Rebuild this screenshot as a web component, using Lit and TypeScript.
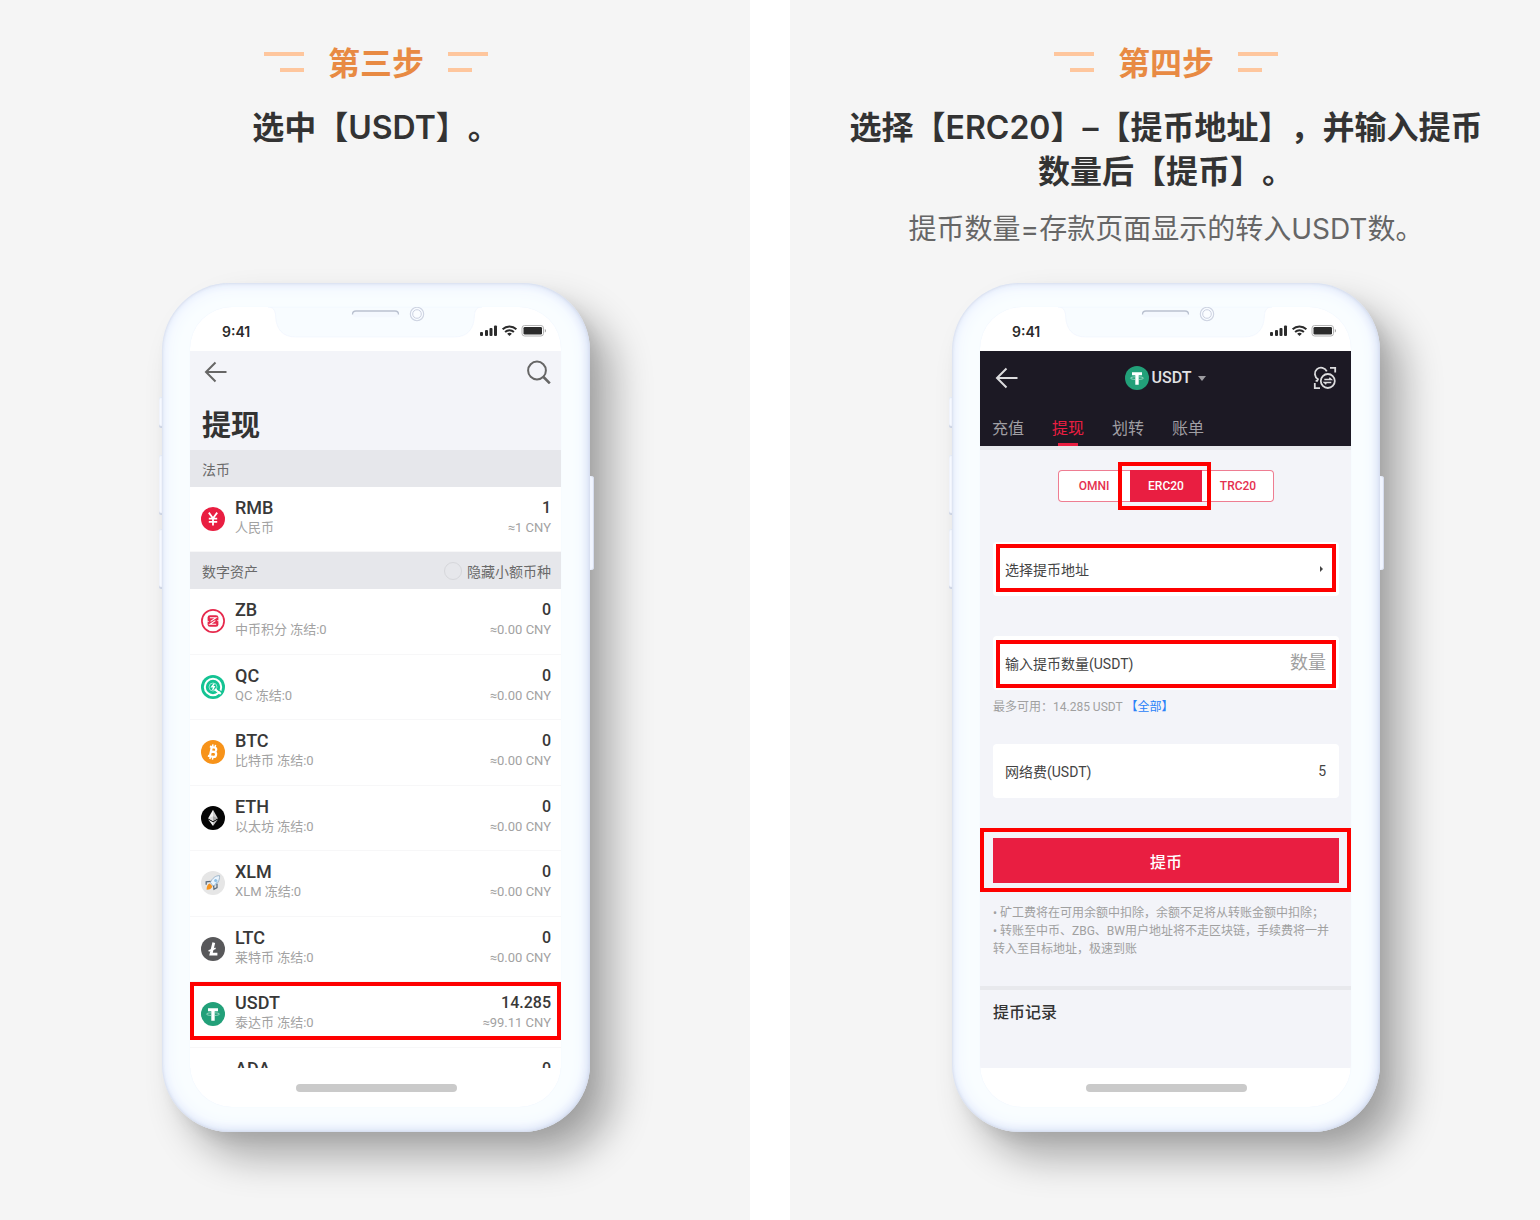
import { LitElement, html, css, svg, nothing } from "lit";
import { customElement, property } from "lit/decorators.js";

interface Asset {
  code: string;
  note: string;
  amount: string;
  value: string;
  marked?: boolean;
}

const FIAT: Asset[] = [{ code: "RMB", note: "人民币", amount: "1", value: "≈1 CNY" }];

const COINS: Asset[] = [
  { code: "ZB", note: "中币积分 冻结:0", amount: "0", value: "≈0.00 CNY" },
  { code: "QC", note: "QC 冻结:0", amount: "0", value: "≈0.00 CNY" },
  { code: "BTC", note: "比特币 冻结:0", amount: "0", value: "≈0.00 CNY" },
  { code: "ETH", note: "以太坊 冻结:0", amount: "0", value: "≈0.00 CNY" },
  { code: "XLM", note: "XLM 冻结:0", amount: "0", value: "≈0.00 CNY" },
  { code: "LTC", note: "莱特币 冻结:0", amount: "0", value: "≈0.00 CNY" },
  { code: "USDT", note: "泰达币 冻结:0", amount: "14.285", value: "≈99.11 CNY", marked: true },
  { code: "ADA", note: "", amount: "0", value: "" },
];

const COIN_ART: Record<string, unknown> = {
  RMB: svg`<circle cx="12" cy="12" r="12" fill="#e91e41"/>
    <path d="M7.8 5.600 12 11.200l4.200-5.600M12 11v7.600M7.800 11.600h8.400M7.800 14.800h8.400" fill="none" stroke="#fff" stroke-width="1.800"/>`,
  ZB: svg`<circle cx="12" cy="12" r="11.100" fill="#fff" stroke="#e6294c" stroke-width="1.700"/>
    <rect x="6.600" y="6.200" width="10.800" height="11.600" rx="2.400" fill="#e6294c"/>
    <path d="M8.800 8.800h6.200l-5.400 3.600M15.200 15.200H9l5.400-3.600" fill="none" stroke="#fff" stroke-width="1.100"/>
    <path d="M6.400 11.400l1.800.9-1.800.9zM17.600 10.800l-1.800.9 1.800.9z" fill="#fff"/>`,
  QC: svg`<circle cx="12" cy="12" r="12" fill="#14c393"/>
    <circle cx="12" cy="12" r="8.200" fill="none" stroke="#fff" stroke-width="2"/>
    <circle cx="12" cy="12" r="4" fill="none" stroke="#c9f3e6" stroke-width=".7"/>
    <path d="M13.200 8.600 10.800 11.800h2.400l-1.600 3" fill="none" stroke="#fff" stroke-width="1.400"/>
    <path d="m13.800 14.200 6 4.600" stroke="#fff" stroke-width="2.200"/>
    <path d="m16.500 14.300 4.500 3" stroke="#14c393" stroke-width="1.300"/>`,
  BTC: svg`<circle cx="12" cy="12" r="12" fill="#f7931a"/>
    <g transform="rotate(12 12 12)" fill="none" stroke="#fff">
      <path d="M9.800 7.300v9.400M7.800 7.300h4.700a2.200 2.200 0 0 1 0 4.400H9.800h3.300a2.500 2.500 0 0 1 0 5H7.800" stroke-width="2.200"/>
      <path d="M10.400 4.500v2.500M13 4.500v2.500M10.400 17v2.500M13 17v2.500" stroke-width="1.500"/>
    </g>`,
  ETH: svg`<circle cx="12" cy="12" r="12" fill="#050505"/>
    <path d="M12 3.800 7.200 12.300 12 15z" fill="#f4f4f4"/><path d="m12 3.800 4.800 8.500L12 15z" fill="#cfcfcf"/>
    <path d="M12 10.200 7.200 12.300 12 15z" fill="#dcdcdc"/><path d="m12 10.200 4.800 2.100L12 15z" fill="#a8a8a8"/>
    <path d="M7.200 13.500 12 20v-3.800z" fill="#f4f4f4"/><path d="M16.800 13.500 12 20v-3.800z" fill="#c4c4c4"/>`,
  XLM: svg`<circle cx="12" cy="12" r="12" fill="#e6e6e6"/>
    <path d="M18.600 4.600c-4 0-7.200 2.400-9.200 6.800l2.800 3.800c4-1.600 6.600-5.600 6.400-10.600z" fill="#eaf4fd" stroke="#8fa9c0" stroke-width=".8"/>
    <path d="m12.200 15.200 3.400-2.400 1.600-4.600z" fill="#a9cdea"/>
    <circle cx="14.600" cy="9.400" r="1.500" fill="#8fbfe4"/>
    <path d="m9.600 10.400-4.400.4v3M12.600 14.600l.4 3.600 3-1.600v-3.800" fill="none" stroke="#5c6c7c" stroke-width="1.300"/>
    <path d="M8.800 12.600c-2.400.8-3.200 3-3.200 6.200 3 0 5.200-1.200 5.800-3.600z" fill="#f7941d"/>`,
  LTC: svg`<circle cx="12" cy="12" r="12" fill="#58585a"/>
    <path d="M12.800 5.600 10 17.200h6.400" fill="none" stroke="#fff" stroke-width="2.800"/>
    <path d="m7.600 14 7-2.800" stroke="#fff" stroke-width="1.500"/>`,
  USDT: svg`<circle cx="12" cy="12" r="12" fill="#22a079"/>
    <path d="M7 6.200h10v3h-3.300v9.600h-3.400V9.200H7z" fill="#fff"/>
    <path d="M10.500 10.800c-2.900.1-5 .6-5 1.300s2.100 1.300 5 1.400M13.500 10.800c2.900.1 5 .6 5 1.300s-2.100 1.300-5 1.400" fill="none" stroke="#bfe6d8" stroke-width=".7"/>`,
};

const coin = (code: string) =>
  html`<svg class="coin" viewBox="0 0 24 24" aria-hidden="true">${COIN_ART[code] ?? nothing}</svg>`;

const backArrow = html`<svg class="glyph" viewBox="0 0 24 24" aria-hidden="true">
  <path d="M12.500 2.500 3 12l9.500 9.500M3 12h20.500" fill="none" stroke="currentColor" stroke-width="2" />
</svg>`;

const FONT_UI = css`Roboto, "Noto Sans CJK SC", sans-serif`;

const shared = css`
  :host {
    display: block;
    font-family: ${FONT_UI};
    text-spacing-trim: space-all;
  }
  * {
    box-sizing: border-box;
  }
  button {
    font: inherit;
    color: inherit;
    background: none;
    border: 0;
    padding: 0;
    cursor: pointer;
  }
  h2,
  h3,
  p,
  ul {
    margin: 0;
    padding: 0;
    list-style: none;
  }
  .glyph {
    display: block;
    width: 24px;
    height: 24px;
  }
  .coin {
    display: block;
    flex: none;
    width: 24px;
    height: 24px;
  }
  .mark {
    position: absolute;
    border: 4px solid #fe0000;
    pointer-events: none;
  }
`;

@customElement("phone-frame")
class PhoneFrame extends LitElement {
  static styles = [
    shared,
    css`
      .body {
        position: relative;
        width: 428px;
        max-width: 100%;
        margin: 0 auto;
        padding: 24px 29px 25px 28px;
        border-radius: 68px;
        background: #f9fdff;
        box-shadow:
          inset 0 0 3px #cdd4e4,
          inset -2px -1px 10px #d3dcf2,
          inset 0 0 20px #e8effe,
          24px 26px 38px rgba(0, 0, 0, 0.3),
          6px 8px 14px rgba(0, 0, 0, 0.06);
      }
      .key {
        position: absolute;
        left: -3px;
        width: 3px;
        border-radius: 2px 0 0 2px;
        background: #f6f9ff;
        box-shadow: inset 0 -2px 1px #ccd3e2, inset 0 1px 1px #e4e9f3;
      }
      .key.mute {
        top: 114px;
        height: 31px;
      }
      .key.up {
        top: 172px;
        height: 60px;
      }
      .key.down {
        top: 246px;
        height: 60px;
      }
      .key.power {
        top: 193px;
        left: auto;
        right: -4px;
        width: 4px;
        height: 94px;
        border-radius: 0 3px 3px 0;
        background: #f1f5ff;
        box-shadow: inset -1px 0 1px #d5dcee;
      }
      .screen {
        position: relative;
        overflow: hidden;
        border-radius: 42px;
        background: #fff;
        box-shadow: 0 0 1px #e6eefc;
      }
      .status {
        display: flex;
        justify-content: space-between;
        align-items: flex-end;
        height: 44px;
        padding: 0 15px 9px 32px;
        color: #2b2b2b;
        font: 600 14px/20px Inter, sans-serif;
      }
      .signals {
        display: block;
        width: 66px;
        height: 20px;
      }
      .notch {
        position: absolute;
        top: 0;
        left: 78px;
        width: 216px;
        height: 32px;
      }
      .content {
        height: 717px;
        overflow: hidden;
      }
      .home {
        display: flex;
        justify-content: center;
        padding: 16px 14px 15px 16px;
      }
      .bar {
        width: 161px;
        height: 8px;
        border-radius: 4px;
        background: #cacaca;
      }
    `,
  ];

  render() {
    return html`
      <div class="body">
        <span class="key mute"></span><span class="key up"></span><span class="key down"></span
        ><span class="key power"></span>
        <div class="screen">
          <div class="status">
            <span>9:41</span>
            <svg class="signals" viewBox="0 1 66 20" aria-hidden="true">
              <g fill="#2b2b2b">
                <rect x="0" y="11" width="3" height="4" rx="1" />
                <rect x="5" y="9" width="3" height="6" rx="1" />
                <rect x="9.500" y="7" width="3" height="8" rx="1" />
                <rect x="14" y="4.500" width="3" height="10.500" rx="1" />
                <path d="M29.500 15l-2.400-2.300a3.600 3.600 0 0 1 4.800 0z" />
                <rect x="43.500" y="6" width="18.500" height="7.500" rx="1.300" />
              </g>
              <g fill="none" stroke="#2b2b2b" stroke-width="1.900">
                <path d="M22.600 8.300a10 10 0 0 1 13.800 0" />
                <path d="M25.100 11a6.300 6.300 0 0 1 8.800 0" />
              </g>
              <rect x="42" y="4.500" width="21.500" height="10.500" rx="2.600" fill="none" stroke="#b4b4b4" />
              <path d="M64.800 8v3.500c.8-.3 1.200-1 1.200-1.750s-.4-1.450-1.200-1.750z" fill="#a6a6a6" />
            </svg>
          </div>
          <svg class="notch" viewBox="0 0 216 32" aria-hidden="true">
            <path
              d="M0 0c5 0 7 3 7.500 8C8 22 14 30 28 30h158c14 0 20-8 20.500-22 .5-5 2.500-8 7.500-8z"
              fill="#f8fcff"
              stroke="#eef4fd"
              stroke-width=".6"
            />
            <rect x="84.500" y="3.800" width="46" height="6.500" rx="3.250" fill="#f4f8fe" />
            <path d="M84.500 7.500c0-2 1.500-3.500 3.500-3.500h39c2 0 3.500 1.500 3.500 3.500" fill="none" stroke="#bac1d0" stroke-width="1.300" />
            <circle cx="149" cy="7" r="6.700" fill="#f8fbff" stroke="#ced4e2" stroke-width="1.100" />
            <circle cx="149" cy="7" r="4.300" fill="#fbfdff" stroke="#cbd1e1" />
          </svg>
          <div class="content"><slot></slot></div>
          <div class="home"><span class="bar"></span></div>
        </div>
      </div>
    `;
  }
}

@customElement("asset-screen")
class AssetScreen extends LitElement {
  static styles = [
    shared,
    css`
      .top {
        padding: 9px 10px 4px 12px;
        background: #f3f4f9;
        color: #666;
      }
      .nav {
        display: flex;
        justify-content: space-between;
        align-items: center;
        padding-left: 1px;
      }
      .title {
        margin-top: 22px;
        color: #333;
        font-size: 29px;
        line-height: 40px;
        font-weight: 700;
      }
      .section {
        display: flex;
        justify-content: space-between;
        align-items: center;
        height: 37px;
        padding: 0 10px 0 12px;
        background: #e6e7eb;
        color: #6a6a6a;
        font-size: 14px;
        font-weight: 400;
      }
      .hide {
        display: flex;
        align-items: center;
        gap: 5px;
      }
      .round {
        appearance: none;
        width: 18px;
        height: 18px;
        margin: 0;
        border: 1px solid #d6d7db;
        border-radius: 50%;
      }
      .fiat {
        display: grid;
        min-height: 65px;
      }
      .coins {
        display: grid;
        grid-auto-rows: 1fr;
        min-height: 524px;
      }
      .row {
        position: relative;
        display: flex;
        gap: 10px;
        padding: 11px 10px 0 11px;
        border-bottom: 1px solid #f7f7f8;
        background: #fff;
      }
      .row .coin {
        margin-top: 9px;
      }
      .text {
        flex: 1;
        display: grid;
        grid-template-columns: 1fr auto;
        grid-auto-rows: 20px;
        line-height: 20px;
        align-content: start;
      }
      .code,
      .amount {
        color: #383838;
        font-size: 18px;
        font-weight: 500;
      }
      .amount {
        font-size: 16px;
      }
      .note,
      .value {
        color: #a2a2a2;
        font-size: 13px;
      }
      .amount,
      .value {
        text-align: right;
      }
      .row .mark {
        inset: 0 0 auto;
        height: 58px;
      }
    `,
  ];

  private row(a: Asset) {
    return html`<li class="row">
      ${coin(a.code)}
      <div class="text">
        <span class="code">${a.code}</span><span class="amount">${a.amount}</span>
        <span class="note">${a.note}</span><span class="value">${a.value}</span>
      </div>
      ${a.marked ? html`<span class="mark"></span>` : nothing}
    </li>`;
  }

  render() {
    return html`
      <header class="top">
        <div class="nav">
          <button aria-label="返回">${backArrow}</button>
          <button aria-label="搜索">
            <svg class="glyph" viewBox="0 0 24 24" aria-hidden="true">
              <circle cx="10" cy="10.500" r="8.900" fill="none" stroke="currentColor" stroke-width="2" />
              <path d="m16.500 17 6.300 6.300" stroke="currentColor" stroke-width="2.600" />
            </svg>
          </button>
        </div>
        <h3 class="title">提现</h3>
      </header>
      <div class="section">法币</div>
      <ul class="fiat">
        ${FIAT.map((a) => this.row(a))}
      </ul>
      <div class="section">
        <span>数字资产</span>
        <label class="hide"><input class="round" type="checkbox" />隐藏小额币种</label>
      </div>
      <ul class="coins">
        ${COINS.map((a) => this.row(a))}
      </ul>
    `;
  }
}

@customElement("withdraw-screen")
class WithdrawScreen extends LitElement {
  static styles = [
    shared,
    css`
      :host {
        height: 100%;
        background: #f3f4f9;
      }
      .top {
        padding: 15px 14px 0 12px;
        background: #1c1924;
        color: #dcdcde;
      }
      .nav {
        display: flex;
        justify-content: space-between;
        align-items: center;
        padding-left: 2px;
      }
      .pick {
        display: flex;
        align-items: center;
        gap: 3px;
        color: #e2e2e4;
        font-size: 16px;
        line-height: 24px;
        font-weight: 500;
      }
      .caret {
        margin-left: 4px;
        border: 4px solid transparent;
        border-top: 5px solid #9c9ba0;
        border-bottom: 0;
      }
      .tabs {
        display: flex;
        gap: 28px;
        margin-top: 19px;
      }
      .tab {
        display: flex;
        flex-direction: column;
        align-items: center;
        gap: 2px;
        height: 37px;
        padding-top: 8px;
        color: #a09fa3;
        font-size: 16px;
        line-height: 24px;
      }
      .tab.on {
        color: #e91e41;
      }
      .tab.on::after {
        content: "";
        width: 20px;
        height: 3px;
        background: #e91e41;
      }
      .form {
        padding: 20px 12px 28px 13px;
        border-top: 4px solid #e8e9ed;
      }
      .chains {
        position: relative;
        display: grid;
        grid-template-columns: repeat(3, 72px);
        width: max-content;
        height: 32px;
        margin: 0 auto 40px;
        border-radius: 4px;
        box-shadow: inset 0 0 0 1px #ee7d92;
        background: #fff;
        color: #e5304f;
        font-size: 12px;
        font-weight: 500;
      }
      .chain.on {
        background: #e91e41;
        color: #fff;
      }
      .chains .mark {
        inset: -8px 63px -8px 60px;
      }
      .card {
        position: relative;
        display: flex;
        justify-content: space-between;
        align-items: center;
        width: 100%;
        height: 54px;
        padding: 0 13px 0 12px;
        border-radius: 4px;
        background: #fff;
        color: #444;
        font-size: 14px;
        text-align: left;
      }
      .card.address {
        margin-bottom: 40px;
      }
      .card.address .mark {
        inset: 2px 3px 4px;
      }
      .card.quantity .mark {
        inset: 4px 3px 2px;
      }
      .more {
        margin-right: 3px;
        border: 3px solid transparent;
        border-left: 3px solid #444;
        border-right: 0;
      }
      .entry {
        width: 80px;
        border: 0;
        padding: 0;
        background: none;
        color: #444;
        font: 18px/26px ${FONT_UI};
        text-align: right;
        outline: 0;
      }
      .entry::placeholder {
        color: #a0a0a0;
        opacity: 1;
      }
      .hint {
        margin: 8px 0 28px;
        color: #a0a0a0;
        font-size: 12px;
        line-height: 18px;
      }
      .all {
        color: #2a82f8;
      }
      .action {
        position: relative;
        margin: 40px 0 21px;
      }
      .action .mark {
        inset: -10px -12px -9px -13px;
      }
      .send {
        display: block;
        width: 100%;
        height: 45px;
        background: #e91e41;
        color: #fff;
        font-size: 16px;
        font-weight: 500;
      }
      .notes {
        color: #a0a0a0;
        font-size: 12px;
        line-height: 18px;
      }
      .log {
        padding: 11px 13px;
        border-top: 4px solid #e8e9ed;
        color: #333;
        font-size: 16px;
        line-height: 24px;
        font-weight: 500;
      }
    `,
  ];

  render() {
    return html`
      <header class="top">
        <div class="nav">
          <button aria-label="返回">${backArrow}</button>
          <button class="pick">${coin("USDT")}<span>USDT</span><span class="caret"></span></button>
          <button aria-label="扫码转换">
            <svg class="glyph" viewBox="0 0 24 24" aria-hidden="true">
              <g fill="none" stroke="currentColor" stroke-width="1.800">
                <path d="M17 1.800h5.200v4.700M1.800 17v5.200h5.200" />
                <path d="M2.600 14.800h1.600L5 13.200A6.200 6.200 0 1 1 13.800 5.400" />
                <circle cx="14.800" cy="15" r="7" />
                <path d="M11.300 13.500h7l-2-1.800M18.300 16.500h-7l2 1.800" stroke-width="1.400" />
              </g>
            </svg>
          </button>
        </div>
        <div class="tabs">
          ${["充值", "提现", "划转", "账单"].map(
            (t) => html`<button class="tab ${t === "提现" ? "on" : ""}">${t}</button>`,
          )}
        </div>
      </header>
      <div class="form">
        <div class="chains">
          ${["OMNI", "ERC20", "TRC20"].map(
            (c) =>
              html`<button class="chain ${c === "ERC20" ? "on" : ""}" aria-pressed=${c === "ERC20"}>
                ${c}
              </button>`,
          )}
          <span class="mark"></span>
        </div>
        <button class="card address">
          <span>选择提币地址</span><span class="more"></span><span class="mark"></span>
        </button>
        <div class="card quantity">
          <label for="quantity">输入提币数量(USDT)</label>
          <input class="entry" id="quantity" placeholder="数量" inputmode="decimal" />
          <span class="mark"></span>
        </div>
        <p class="hint">最多可用：14.285 USDT <button class="all">【全部】</button></p>
        <div class="card"><span>网络费(USDT)</span><span>5</span></div>
        <div class="action">
          <button class="send">提币</button>
          <span class="mark"></span>
        </div>
        <div class="notes">
          <p>• 矿工费将在可用余额中扣除，余额不足将从转账金额中扣除；</p>
          <p>• 转账至中币、ZBG、BW用户地址将不走区块链，手续费将一并转入至目标地址，极速到账</p>
        </div>
      </div>
      <h3 class="log">提币记录</h3>
    `;
  }
}

@customElement("step-heading")
class StepHeading extends LitElement {
  @property() step = "";
  @property() headline = "";
  @property() detail = "";

  static styles = [
    shared,
    css`
      :host {
        font-family: Inter, "Noto Sans CJK SC", sans-serif;
        text-align: center;
      }
      .step {
        display: flex;
        justify-content: center;
        align-items: flex-start;
        gap: 24px;
        color: #e88a43;
        font-size: 32px;
        line-height: 40px;
        font-weight: 600;
      }
      .dashes {
        display: grid;
        gap: 12px;
        width: 40px;
        padding-top: 8px;
        justify-items: end;
      }
      .dashes::before,
      .dashes::after {
        content: "";
        width: 40px;
        height: 4px;
        background: #fec69d;
      }
      .dashes::after {
        width: 24px;
      }
      .dashes.right {
        justify-items: start;
      }
      .headline {
        margin-top: 22px;
        color: #333;
        font-size: 32px;
        line-height: 44px;
        font-weight: 600;
      }
      .detail {
        margin-top: 15px;
        color: #666;
        font-size: 28px;
        line-height: 40px;
      }
    `,
  ];

  render() {
    return html`
      <div class="step"><span class="dashes"></span><span>${this.step}</span><span class="dashes right"></span></div>
      <h2 class="headline">${this.headline}</h2>
      ${this.detail ? html`<p class="detail">${this.detail}</p>` : nothing}
    `;
  }
}

@customElement("app-root")
class AppRoot extends LitElement {
  static styles = css`
    :host {
      display: block;
      background: #fff;
    }
    .page {
      display: grid;
      grid-template-columns: 1fr 1fr;
      grid-template-rows: auto 1fr;
      column-gap: 40px;
      min-height: 100vh;
    }
    .panel {
      display: grid;
      grid-row: span 2;
      grid-template-rows: subgrid;
      row-gap: 34px;
      box-sizing: border-box;
      padding: 44px 44px 88px 46px;
      background: #f5f5f5;
      overflow: hidden;
    }
  `;

  render() {
    return html`
      <main class="page">
        <section class="panel">
          <step-heading step="第三步" headline="选中【USDT】。"></step-heading>
          <phone-frame><asset-screen></asset-screen></phone-frame>
        </section>
        <section class="panel">
          <step-heading
            step="第四步"
            headline="选择【ERC20】–【提币地址】，并输入提币数量后【提币】。"
            detail="提币数量=存款页面显示的转入USDT数。"
          ></step-heading>
          <phone-frame><withdraw-screen></withdraw-screen></phone-frame>
        </section>
      </main>
    `;
  }
}
